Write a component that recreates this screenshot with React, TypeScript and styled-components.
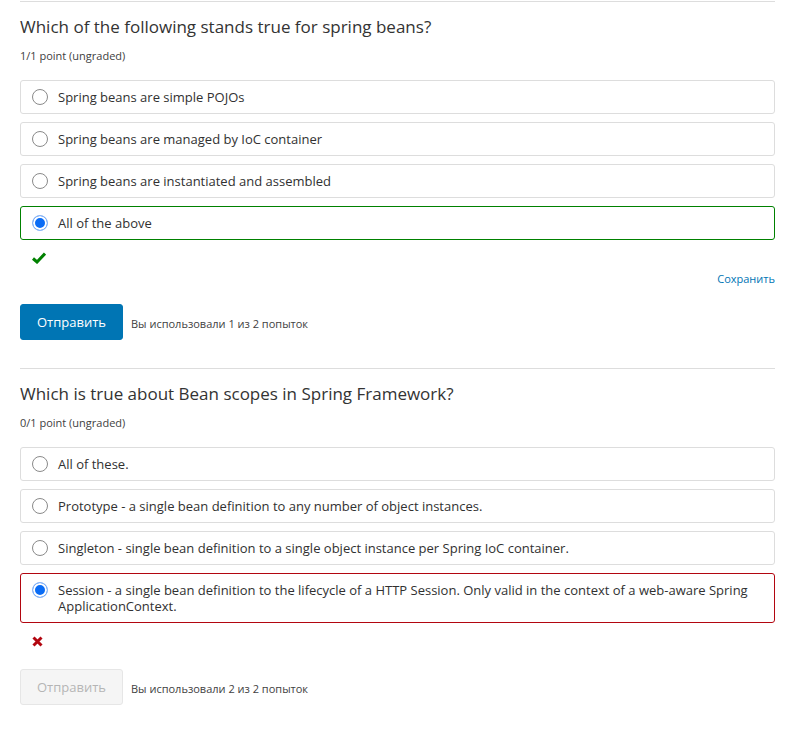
import React from 'react'
import styled, { createGlobalStyle, css } from 'styled-components'

const GlobalStyle = createGlobalStyle`
  body {
    margin: 0;
    background: #fff;
    font-family: 'Open Sans', 'Liberation Sans', sans-serif;
    color: #313131;
  }
`

type Status = 'correct' | 'incorrect'

interface Problem {
  title: string
  points: string
  options: string[]
  selected: number
  status: Status
  attempts: string
  canSave: boolean
  disabled: boolean
}

const problems: Problem[] = [
  {
    title: 'Which of the following stands true for spring beans?',
    points: '1/1 point (ungraded)',
    options: [
      'Spring beans are simple POJOs',
      'Spring beans are managed by IoC container',
      'Spring beans are instantiated and assembled',
      'All of the above',
    ],
    selected: 3,
    status: 'correct',
    attempts: 'Вы использовали 1 из 2 попыток',
    canSave: true,
    disabled: false,
  },
  {
    title: 'Which is true about Bean scopes in Spring Framework?',
    points: '0/1 point (ungraded)',
    options: [
      'All of these.',
      'Prototype - a single bean definition to any number of object instances.',
      'Singleton - single bean definition to a single object instance per Spring IoC container.',
      'Session - a single bean definition to the lifecycle of a HTTP Session. Only valid in the context of a web-aware Spring ApplicationContext.',
    ],
    selected: 3,
    status: 'incorrect',
    attempts: 'Вы использовали 2 из 2 попыток',
    canSave: false,
    disabled: true,
  },
]

const Page = styled.div`
  padding: 0 31px 0 20px;
  width: 755px;
`

const Section = styled.section`
  border-top: 1px solid #ddd;
  margin-top: 1px;
  padding-bottom: 27px;
`

const Title = styled.h3`
  margin: 13px 0 0;
  font-size: 17px;
  font-weight: 400;
  line-height: 24px;
  color: #333;
`

const Points = styled.div`
  margin-top: 9px;
  font-size: 11px;
  line-height: 16px;
  color: #414141;
`

const Options = styled.div`
  margin-top: 16px;
  display: flex;
  flex-direction: column;
  gap: 8px;
`

const Option = styled.label<{ $status?: Status }>`
  display: flex;
  align-items: flex-start;
  gap: 10px;
  padding: 8px 11px;
  border: 1px solid #ddd;
  border-radius: 3px;
  font-size: 13px;
  line-height: 16px;
  color: #313131;
  ${p =>
    p.$status === 'correct' &&
    css`
      border-color: #008100;
    `}
  ${p =>
    p.$status === 'incorrect' &&
    css`
      border-color: #b20610;
    `}
`

const Radio = styled.span<{ $checked: boolean }>`
  flex: none;
  box-sizing: border-box;
  width: 16px;
  height: 16px;
  border-radius: 50%;
  border: 1px solid #8a8a8a;
  background: #fff;
  ${p =>
    p.$checked &&
    css`
      border: 1px solid #8fb8f5;
      box-shadow: inset 0 0 0 2px #fff;
      background: #0a6cf5;
    `}
`

const Feedback = styled.div`
  margin-top: 10px;
  height: 16px;
  padding-left: 12px;
  display: flex;
  align-items: center;
`

const SaveRow = styled.div`
  margin-top: 4px;
  display: flex;
  justify-content: flex-end;
`

const SaveLink = styled.a`
  font-size: 11px;
  line-height: 18px;
  color: #0075b4;
  text-decoration: none;
  cursor: pointer;
`

const Actions = styled.div<{ $offset: number }>`
  margin-top: ${p => p.$offset}px;
  display: flex;
  align-items: center;
  gap: 8px;
`

const SubmitButton = styled.button<{ $disabled: boolean }>`
  height: 36px;
  padding: 0 16px;
  border-radius: 3px;
  font-family: inherit;
  font-size: 13px;
  border: 1px solid #0075b4;
  background: #0075b4;
  color: #fff;
  cursor: pointer;
  ${p =>
    p.$disabled &&
    css`
      background: #f5f5f5;
      border-color: #e6e6e6;
      color: #b5b5b5;
      cursor: default;
    `}
`

const Attempts = styled.span`
  font-size: 11px;
  color: #414141;
  padding-top: 3px;
`

const CheckIcon = () => (
  <svg width="14" height="12" viewBox="0 0 14 12">
    <path d="M1 6.5 L5 10 L13 1.5" fill="none" stroke="#008100" strokeWidth="3" />
  </svg>
)

const CrossIcon = () => (
  <svg width="11" height="11" viewBox="0 0 11 11">
    <path d="M1.5 1.5 L9.5 9.5 M9.5 1.5 L1.5 9.5" fill="none" stroke="#b20610" strokeWidth="3" />
  </svg>
)

const ProblemBlock = ({ problem }: { problem: Problem }) => (
  <Section>
    <Title>{problem.title}</Title>
    <Points>{problem.points}</Points>
    <Options>
      {problem.options.map((text, i) => {
        const checked = i === problem.selected
        return (
          <Option key={text} $status={checked ? problem.status : undefined}>
            <Radio $checked={checked} />
            <span>{text}</span>
          </Option>
        )
      })}
    </Options>
    <Feedback>{problem.status === 'correct' ? <CheckIcon /> : <CrossIcon />}</Feedback>
    {problem.canSave ? (
      <SaveRow>
        <SaveLink>Сохранить</SaveLink>
      </SaveRow>
    ) : null}
    <Actions $offset={problem.canSave ? 16 : 20}>
      <SubmitButton $disabled={problem.disabled} disabled={problem.disabled}>
        Отправить
      </SubmitButton>
      <Attempts>{problem.attempts}</Attempts>
    </Actions>
  </Section>
)

const App = () => (
  <>
    <GlobalStyle />
    <Page>
      {problems.map(p => (
        <ProblemBlock key={p.title} problem={p} />
      ))}
    </Page>
  </>
)

export default App
